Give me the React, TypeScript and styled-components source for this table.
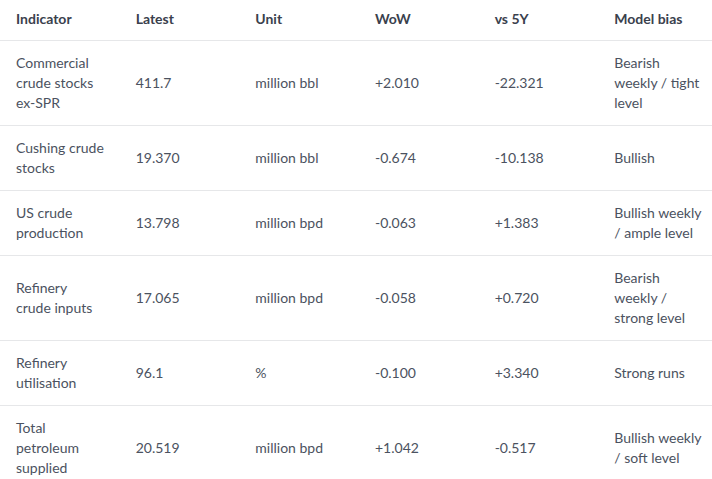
import React from "react";
import styled, { createGlobalStyle } from "styled-components";

const Global = createGlobalStyle`
  html, body { margin: 0; padding: 0; background: #ffffff; overflow: hidden; }
  body { font-family: Lato, "Open Sans", sans-serif; }
`;

const Wrap = styled.div`
  width: 712px;
  overflow: hidden;
`;

const Table = styled.table`
  width: 718px;
  table-layout: fixed;
  border-collapse: collapse;
  font-family: Lato, sans-serif;
  font-size: 14px;
  line-height: 20px;
  color: #4b5260;
`;

const Th = styled.th`
  text-align: left;
  font-weight: 700;
  color: #3a414d;
  padding: 9px 15px 11px 16px;
  border-bottom: 1px solid #e6e7e9;
  vertical-align: middle;
`;

const Td = styled.td`
  padding: 12px 15px 12px 16px;
  border-bottom: 1px solid #e6e7e9;
  vertical-align: middle;
`;

const rows: string[][] = [
  ["Commercial crude stocks ex-SPR", "411.7", "million bbl", "+2.010", "-22.321", "Bearish weekly / tight level"],
  ["Cushing crude stocks", "19.370", "million bbl", "-0.674", "-10.138", "Bullish"],
  ["US crude production", "13.798", "million bpd", "-0.063", "+1.383", "Bullish weekly / ample level"],
  ["Refinery crude inputs", "17.065", "million bpd", "-0.058", "+0.720", "Bearish weekly / strong level"],
  ["Refinery utilisation", "96.1", "%", "-0.100", "+3.340", "Strong runs"],
  ["Total petroleum supplied", "20.519", "million bpd", "+1.042", "-0.517", "Bullish weekly / soft level"],
];

const headers = ["Indicator", "Latest", "Unit", "WoW", "vs 5Y", "Model bias"];

export default function App() {
  return (
    <Wrap>
      <Global />
      <Table>
        <colgroup>
          {headers.map((h) => (
            <col key={h} style={{ width: "119.6px" }} />
          ))}
        </colgroup>
        <thead>
          <tr>
            {headers.map((h) => (
              <Th key={h}>{h}</Th>
            ))}
          </tr>
        </thead>
        <tbody>
          {rows.map((r) => (
            <tr key={r[0]}>
              {r.map((c, i) => (
                <Td key={i}>{c}</Td>
              ))}
            </tr>
          ))}
        </tbody>
      </Table>
    </Wrap>
  );
}
